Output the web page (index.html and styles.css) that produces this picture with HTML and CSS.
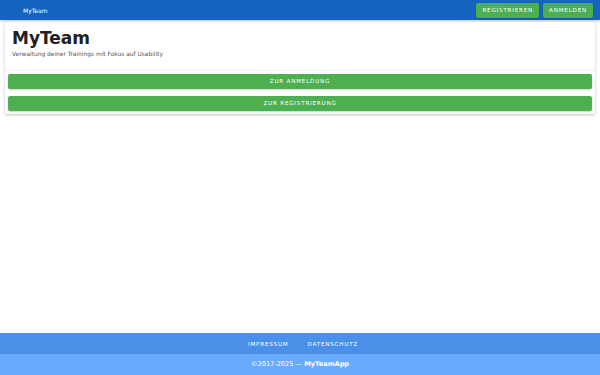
FILE: index.html
```html
<!DOCTYPE html>
<html>
  <head>
    <title>MyTeam</title>
    <link rel="stylesheet" href="styles.css">
  </head>
  <body>
    <header class="navbar">
      <a href="#" class="brand">MyTeam</a>
      <nav class="nav-actions">
        <a href="#" class="btn btn-small">Registrieren</a>
        <a href="#" class="btn btn-small">Anmelden</a>
      </nav>
    </header>

    <main>
      <section class="card">
        <div class="card-head">
          <h1>MyTeam</h1>
          <p>Verwaltung deiner Trainings mit Fokus auf Usability</p>
        </div>
        <div class="card-actions">
          <a href="#" class="btn btn-block">Zur Anmeldung</a>
          <a href="#" class="btn btn-block">Zur Registrierung</a>
        </div>
      </section>
    </main>

    <footer>
      <div class="footer-links">
        <a href="#">Impressum</a>
        <a href="#">Datenschutz</a>
      </div>
      <div class="footer-copy">
        &copy;2017-2025 &mdash; <strong>MyTeamApp</strong>
      </div>
    </footer>
  </body>
</html>
```

FILE: styles.css
```css
* { box-sizing: border-box; }
html, body {
  height: 100%;
}
body {
  margin: 0;
  display: flex;
  flex-direction: column;
  background: #ffffff;
  font-family: "DejaVu Sans", sans-serif;
  color: #212121;
}
a {
  text-decoration: none;
}
.navbar {
  height: 20px;
  flex-shrink: 0;
  background: #1565c0;
  display: flex;
  align-items: center;
  justify-content: space-between;
  padding: 0 7px 0 23px;
  box-shadow: 0 1px 3px rgba(0, 0, 0, 0.25);
}
.brand {
  color: white;
  font-size: 6px;
}
.nav-actions {
  display: flex;
  gap: 4px;
}
.btn {
  display: block;
  background: #4caf50;
  color: white;
  text-transform: uppercase;
  letter-spacing: 0.8px;
  font-size: 5.6px;
  text-align: center;
  border-radius: 2px;
  box-shadow: 0 1px 2px rgba(0, 0, 0, 0.2);
}
.btn-small {
  height: 15px;
  line-height: 15px;
  padding: 0 6px;
}
main {
  flex: 1;
  padding: 2px 5px;
}
.card {
  background: white;
  border-radius: 2px;
  box-shadow: 0 1px 3px rgba(0, 0, 0, 0.25);
}
.card-head {
  padding: 6px 7px 6px;
  border-bottom: 1px solid #f0f0f0;
}
h1 {
  margin: 0;
  font-size: 17px;
  line-height: 20px;
  font-weight: bold;
}
.card-head p {
  margin: 2px 0 6px;
  font-size: 5.9px;
  line-height: 8px;
  color: #555;
}
.card-actions {
  padding: 3px;
  display: flex;
  flex-direction: column;
  gap: 7px;
}
.btn-block {
  height: 15px;
  line-height: 15px;
}
footer {
  flex-shrink: 0;
  text-align: center;
  color: white;
}
.footer-links {
  background: #4a8fe8;
  height: 21px;
  display: flex;
  justify-content: center;
  align-items: center;
  gap: 19px;
  padding-left: 6px;
}
.footer-links a {
  color: white;
  font-size: 5.6px;
  letter-spacing: 0.8px;
  text-transform: uppercase;
}
.footer-copy {
  background: #68aafd;
  height: 21px;
  line-height: 21px;
  font-size: 6.6px;
}
```
